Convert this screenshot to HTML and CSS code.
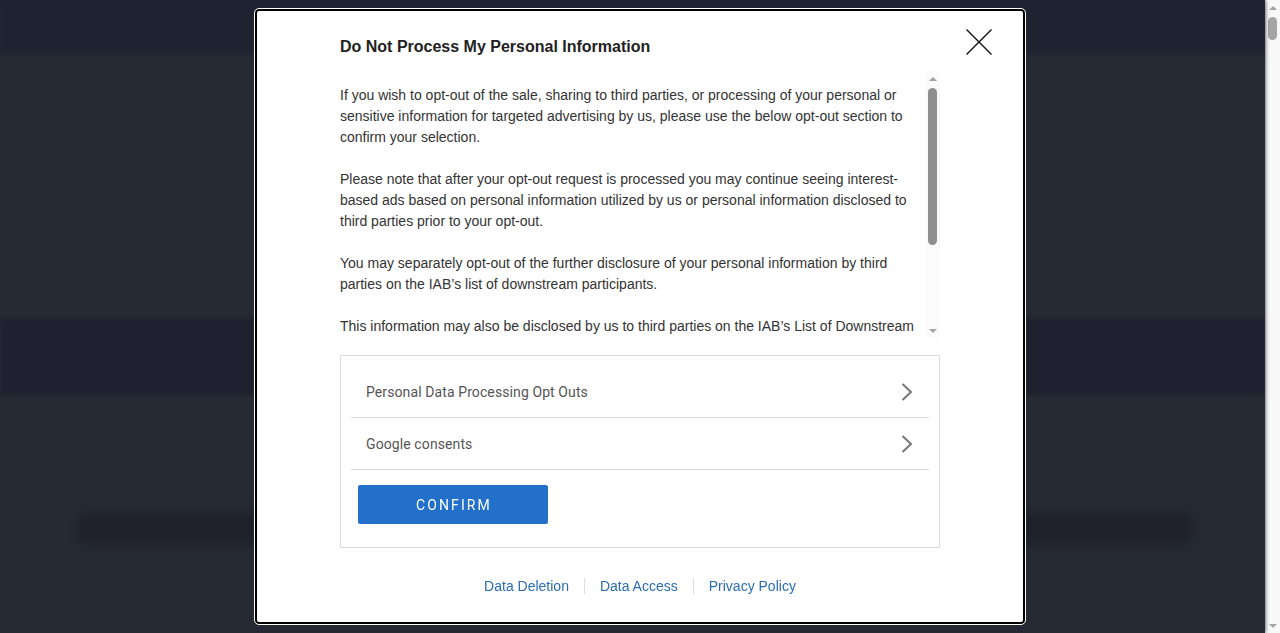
FILE: index.html
```html
<!DOCTYPE html>
<html lang="en">
<head>
<meta charset="utf-8">
<title>Do Not Process My Personal Information</title>
<link rel="stylesheet" href="styles.css">
</head>
<body>
<div class="page">
  <header class="site-header"></header>
  <section class="hero"></section>
  <nav class="band"></nav>
  <main class="content">
    <div class="pill"></div>
  </main>
</div>
<div class="vscroll page-bar" aria-hidden="true">
  <span class="arrow up"></span>
  <div class="track"><span class="thumb page-thumb"></span></div>
  <span class="arrow down"></span>
</div>

<div class="overlay">
  <div class="modal" role="dialog" aria-labelledby="dlg-title">
    <button class="close" aria-label="Close">
      <svg width="26" height="26" viewBox="0 0 26 26"><path d="M0.5 0.5 L25.5 25.5 M25.5 0.5 L0.5 25.5" stroke="#111" stroke-width="1.4" fill="none"/></svg>
    </button>
    <h1 class="title" id="dlg-title">Do Not Process My Personal Information</h1>
    <div class="scroller">
      <div class="scroll-text">
        <p>If you wish to opt-out of the sale, sharing to third parties, or processing of your personal or sensitive information for targeted advertising by us, please use the below opt-out section to confirm your selection.</p>
        <p>Please note that after your opt-out request is processed you may continue seeing interest-based ads based on personal information utilized by us or personal information disclosed to third parties prior to your opt-out.</p>
        <p>You may separately opt-out of the further disclosure of your personal information by third parties on the IAB’s list of downstream participants.</p>
        <p>This information may also be disclosed by us to third parties on the IAB’s List of Downstream</p>
      </div>
      <div class="vscroll inner-bar" aria-hidden="true">
        <span class="arrow up"></span>
        <div class="track"><span class="thumb inner-thumb"></span></div>
        <span class="arrow down"></span>
      </div>
    </div>
    <div class="options">
      <div class="row"><span>Personal Data Processing Opt Outs</span>
        <svg class="chev" width="12" height="18" viewBox="0 0 12 18"><path d="M1.5 1 L10 9 L1.5 17" stroke="#777" stroke-width="2" fill="none"/></svg>
      </div>
      <div class="row"><span>Google consents</span>
        <svg class="chev" width="12" height="18" viewBox="0 0 12 18"><path d="M1.5 1 L10 9 L1.5 17" stroke="#777" stroke-width="2" fill="none"/></svg>
      </div>
      <button class="confirm">CONFIRM</button>
    </div>
    <div class="links">
      <a href="#">Data Deletion</a>
      <a href="#">Data Access</a>
      <a href="#">Privacy Policy</a>
    </div>
  </div>
</div>
</body>
</html>
```

FILE: styles.css
```css
html, body {
  margin: 0;
  padding: 0;
}
body {
  height: 633px;
  overflow: hidden;
  display: flex;
  background: #262a33;
  font-family: "Liberation Sans", Arial, sans-serif;
}
.page {
  flex: 1;
  background: #262a33;
  filter: blur(2px);
}
.site-header {
  height: 55px;
  background: #1f2231;
}
.hero {
  height: 263px;
  background: #262a33;
}
.band {
  height: 77px;
  background: #1f2131;
}
.content {
  padding: 117px 70px 0 75px;
}
.pill {
  height: 33px;
  border-radius: 17px;
  background: #1f222b;
  filter: blur(4px);
}

/* fake classic scrollbars */
.vscroll {
  width: 15px;
  flex: none;
  display: flex;
  flex-direction: column;
  align-items: center;
}
.page-bar {
  background: #f8f8f8;
}
.inner-bar {
  background: #fbfbfb;
}
.arrow {
  flex: none;
  height: 15px;
  width: 15px;
  display: flex;
  align-items: center;
  justify-content: center;
}
.arrow::before {
  content: "";
  width: 0;
  height: 0;
  border-left: 4px solid transparent;
  border-right: 4px solid transparent;
}
.arrow.up::before {
  border-bottom: 4px solid #a3a3a3;
}
.arrow.down::before {
  border-top: 4px solid #a3a3a3;
}
.track {
  flex: 1;
  align-self: stretch;
  display: flex;
  flex-direction: column;
  align-items: center;
}
.thumb {
  width: 9px;
  border-radius: 5px;
  background: #a5a5a5;
}
.page-thumb {
  margin-top: 2px;
  height: 23px;
}
.inner-thumb {
  margin-top: 2px;
  height: 157px;
  background: #8f8f8f;
}

.overlay {
  position: fixed;
  inset: 0;
  display: flex;
  align-items: center;
  justify-content: center;
}
.modal {
  position: relative;
  width: 770px;
  box-sizing: border-box;
  background: #fff;
  border: 2px solid #000;
  outline: 1px solid #fff;
  border-radius: 4px;
  padding: 26px 83px 28px;
  display: flex;
  flex-direction: column;
}
.close {
  position: absolute;
  top: 18px;
  right: 31px;
  width: 26px;
  height: 26px;
  padding: 0;
  border: 0;
  background: none;
  display: flex;
}
.title {
  margin: 0;
  font-size: 16px;
  line-height: 20px;
  font-weight: bold;
  color: #222;
}
.scroller {
  margin-top: 14px;
  height: 267px;
  display: flex;
}
.scroll-text {
  flex: 1;
  overflow: hidden;
  padding-top: 14px;
  font-size: 14px;
  line-height: 21px;
  color: #333;
}
.scroll-text p {
  margin: 0 0 21px;
}
.options {
  margin-top: 17px;
  border: 1px solid #dcdcdc;
  padding: 10px 10px 23px;
  display: flex;
  flex-direction: column;
  align-items: flex-start;
}
.row {
  align-self: stretch;
  height: 51px;
  border-bottom: 1px solid #dcdcdc;
  display: flex;
  align-items: center;
  justify-content: space-between;
  padding: 0 16px 0 15px;
  font-family: Roboto, "Liberation Sans", sans-serif;
  font-size: 14px;
  letter-spacing: 0.1px;
  color: #555;
}
.chev {
  display: block;
}
.confirm {
  margin: 15px 0 0 7px;
  width: 190px;
  height: 39px;
  border: 0;
  border-radius: 2px;
  background: #2270c9;
  color: #fff;
  font-family: Roboto, "Liberation Sans", sans-serif;
  font-size: 14px;
  letter-spacing: 2.1px;
  padding: 0 0 0 2px;
}
.links {
  margin-top: 30px;
  display: flex;
  justify-content: center;
  line-height: 16px;
}
.links a {
  font-size: 14px;
  color: #2a6db5;
  text-decoration: none;
  padding: 0 15px;
}
.links a + a {
  border-left: 1px solid #ddd;
}
```
